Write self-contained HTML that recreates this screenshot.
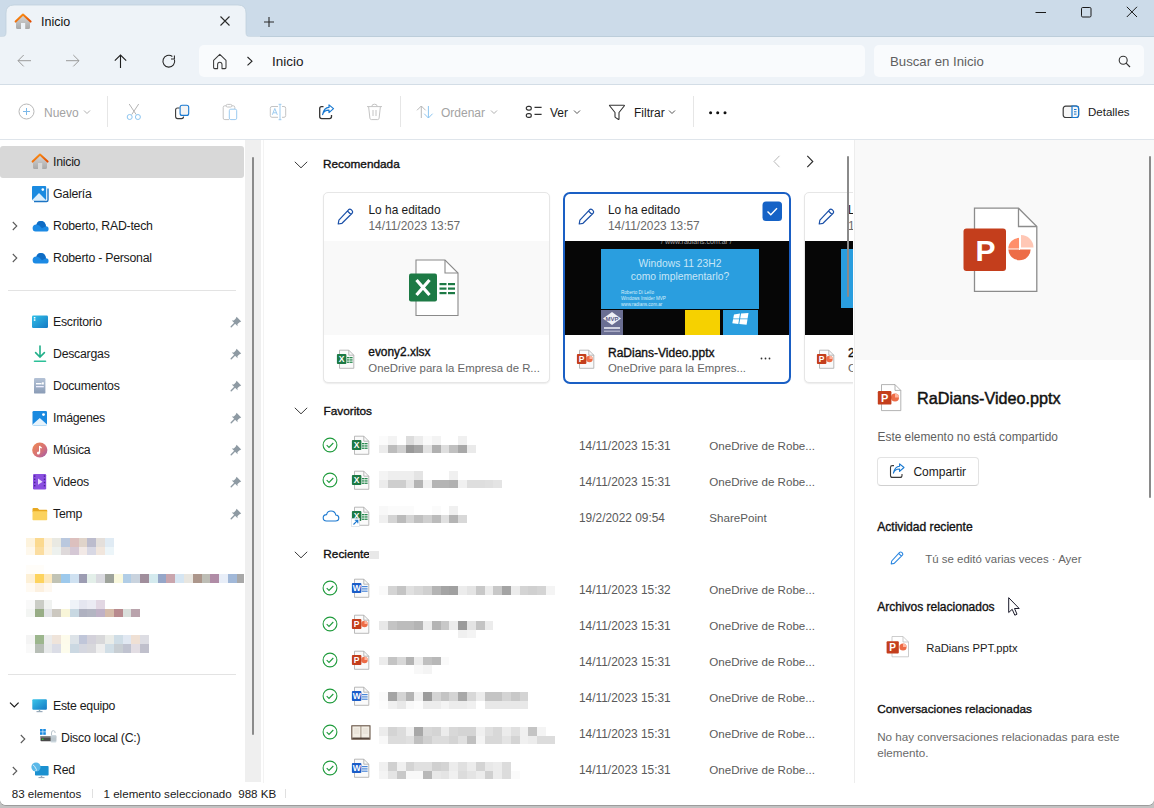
<!DOCTYPE html>
<html><head><meta charset="utf-8">
<style>
*{margin:0;padding:0;box-sizing:border-box}
html,body{width:1154px;height:808px;overflow:hidden;background:#c2c2c2}
body{font-family:"Liberation Sans",sans-serif;font-size:12px;color:#1a1a1a;position:relative}
.a{position:absolute;white-space:nowrap;line-height:1}
svg.a{overflow:visible}
.t12{font-size:12px}
#win{position:absolute;left:0;top:0;width:1154px;height:805px;background:#fff;border-radius:0 0 6px 6px;overflow:hidden;box-shadow:0 1px 0 #9c9c9c}
#title{position:absolute;left:0;top:0;width:1154px;height:37px;background:#ccdbe9}
#tab{position:absolute;left:6px;top:5px;width:241px;height:32px;background:#eef3f8;border-radius:8px 8px 0 0}
#addr{position:absolute;left:0;top:37px;width:1154px;height:48px;background:#eef3f8;border-bottom:1px solid #d3dde6}
#abox{position:absolute;left:199px;top:45px;width:666px;height:32px;background:#f9fbfd;border-radius:5px}
#sbox{position:absolute;left:874px;top:45px;width:270px;height:32px;background:#f9fbfd;border-radius:5px}
#cmd{position:absolute;left:0;top:85px;width:1154px;height:55px;background:#fff;border-bottom:1px solid #dfe5eb}
#nav{position:absolute;left:0;top:140px;width:261px;height:643px;background:#fff}
#content{position:absolute;left:261px;top:140px;width:594px;height:643px;background:#fff;overflow:hidden}
#details{position:absolute;left:855px;top:140px;width:299px;height:643px;background:#fff;border-left:1px solid #ececec}
#status{position:absolute;left:0;top:783px;width:1154px;height:22px;background:#fff}
</style></head><body>
<div id="win">
<div id="title"></div><div class="a" style="left:0;top:36px;width:1154px;height:1px;background:#bccdda"></div>
<svg class="a" style="left:0;top:0" width="260" height="38" viewBox="0 0 260 38"><path d="M1.5 37 Q6 37 6 32.5 V13 Q6 5 14 5 H238 Q246 5 246 13 V32.5 Q246 37 250.5 37" fill="#eef3f8" stroke="#bfcfdc" stroke-width="0.8"/><rect x="0" y="36.6" width="260" height="1.4" fill="#eef3f8"/></svg>
<svg class="a" style="left:14px;top:13px" width="18" height="17" viewBox="0 0 18 17">
 <defs><linearGradient id="hg" x1="0" y1="0" x2="0" y2="1"><stop offset="0" stop-color="#d4d4d4"/><stop offset="1" stop-color="#a8a8a8"/></linearGradient>
 <linearGradient id="rg" x1="0" y1="0" x2="1" y2="1"><stop offset="0" stop-color="#ff9a1a"/><stop offset="1" stop-color="#e04a00"/></linearGradient></defs>
 <path d="M2 9 L9 2.5 L16 9 V14.5 Q16 16 14.5 16 H11.2 V10 H7 V16 H3.5 Q2 16 2 14.5 Z" fill="url(#hg)"/>
 <path d="M1.6 8.6 L9 1.6 L16.6 8.6" fill="none" stroke="url(#rg)" stroke-width="2" stroke-linecap="round" stroke-linejoin="round"/>
</svg>
<div class="a" style="left:41px;top:16.3px;font-size:12.5px;color:#111">Inicio</div>
<svg class="a" style="left:219px;top:15px" width="12" height="12" viewBox="0 0 12 12"><path d="M1.5 1.5 L10.5 10.5 M10.5 1.5 L1.5 10.5" stroke="#2a2a2a" stroke-width="1.1"/></svg>
<svg class="a" style="left:263px;top:16px" width="12" height="12" viewBox="0 0 12 12"><path d="M6 1 V11 M1 6 H11" stroke="#2a2a2a" stroke-width="1.1"/></svg>
<svg class="a" style="left:1034px;top:6px" width="14" height="14" viewBox="0 0 14 14"><path d="M1.5 6.5 H12" stroke="#1a1a1a" stroke-width="1"/></svg>
<svg class="a" style="left:1080px;top:6px" width="12" height="12" viewBox="0 0 12 12"><rect x="1.5" y="1.5" width="9.5" height="9.5" rx="1.2" fill="none" stroke="#1a1a1a" stroke-width="1"/></svg>
<svg class="a" style="left:1126px;top:6px" width="12" height="12" viewBox="0 0 12 12"><path d="M0.8 0.8 L11 11 M11 0.8 L0.8 11" stroke="#1a1a1a" stroke-width="1"/></svg>
<div id="addr"></div>
<svg class="a" style="left:16px;top:53px" width="16" height="16" viewBox="0 0 16 16"><path d="M15 7.7 H2 M7.7 2 L2 7.7 L7.7 13.4" fill="none" stroke="#9a9a9a" stroke-width="1"/></svg>
<svg class="a" style="left:65px;top:53px" width="16" height="16" viewBox="0 0 16 16"><path d="M1 7.7 H14 M8.3 2 L14 7.7 L8.3 13.4" fill="none" stroke="#9a9a9a" stroke-width="1"/></svg>
<svg class="a" style="left:113px;top:53px" width="16" height="16" viewBox="0 0 16 16"><path d="M7.5 15 V2 M1.8 7.7 L7.5 2 L13.2 7.7" fill="none" stroke="#1e1e1e" stroke-width="1.1"/></svg>
<svg class="a" style="left:161px;top:53px" width="16" height="16" viewBox="0 0 16 16"><path d="M11.35 3.49 A5.9 5.9 0 1 0 13.5 6.6" fill="none" stroke="#262626" stroke-width="1.05"/><path d="M10 5.9 H13.4 V2.5" fill="none" stroke="#262626" stroke-width="1.05"/></svg>
<div id="abox"></div>
<svg class="a" style="left:211px;top:53px" width="18" height="18" viewBox="0 0 18 18"><path d="M2.6 7.4 L8.8 1.4 L15 7.4 V14.6 Q15 15.6 14 15.6 H11 V11.6 Q11 9.2 8.8 9.2 Q6.6 9.2 6.6 11.6 V15.6 H3.6 Q2.6 15.6 2.6 14.6 Z" fill="none" stroke="#3a3a3a" stroke-width="1.05" stroke-linejoin="round"/></svg>
<svg class="a" style="left:245px;top:56px" width="10" height="11" viewBox="0 0 10 11"><path d="M2.5 1 L7 5.2 L2.5 9.4" fill="none" stroke="#222" stroke-width="1.1"/></svg>
<div class="a" style="left:272px;top:54.5px;font-size:13.5px;color:#1a1a1a">Inicio</div>
<div id="sbox"></div>
<div class="a" style="left:890px;top:54.5px;font-size:13.2px;color:#5f5f5f">Buscar en Inicio</div>
<svg class="a" style="left:1118px;top:55px" width="13" height="13" viewBox="0 0 13 13"><circle cx="5.2" cy="5.2" r="4" fill="none" stroke="#333" stroke-width="1.1"/><path d="M8.1 8.1 L12 12" stroke="#333" stroke-width="1.2"/></svg>
<div id="cmd"></div>
<svg class="a" style="left:18px;top:103px" width="17" height="17" viewBox="0 0 17 17"><circle cx="8.5" cy="8.5" r="7.5" fill="none" stroke="#b8b8b8" stroke-width="1"/><path d="M8.5 5 V12 M5 8.5 H12" stroke="#7cb8e8" stroke-width="1"/></svg>
<div class="a t12" style="left:44px;top:106.5px;color:#a3a3a3">Nuevo</div>
<svg class="a" style="left:83px;top:109px" width="8" height="6" viewBox="0 0 8 6"><path d="M1 1.5 L4 4.5 L7 1.5" fill="none" stroke="#b0b0b0" stroke-width="1"/></svg>
<div class="a" style="left:107px;top:96px;width:1px;height:31px;background:#e6e6e6"></div>
<svg class="a" style="left:125px;top:103px" width="16" height="18" viewBox="0 0 16 18"><path d="M4.2 1 L11.2 11.6 M13.7 1 L6.7 11.6" stroke="#b4b4b4" stroke-width="1"/><circle cx="4.7" cy="14" r="2.5" fill="#fff" stroke="#8cc5f0" stroke-width="1"/><circle cx="12.9" cy="14" r="2.5" fill="#fff" stroke="#8cc5f0" stroke-width="1"/></svg>
<svg class="a" style="left:174px;top:104px" width="17" height="17" viewBox="0 0 17 17"><path d="M5.6 4 H3.6 Q1.6 4 1.6 6 V12.6 Q1.6 14.6 3.6 14.6 H7.6 Q9.6 14.6 9.6 12.6" fill="none" stroke="#3a3a3a" stroke-width="1.1"/><rect x="6.1" y="1.2" width="8.6" height="10.2" rx="2" fill="#f4f4f4" stroke="#1878d0" stroke-width="1.1"/></svg>
<svg class="a" style="left:222px;top:103px" width="17" height="18" viewBox="0 0 17 18"><path d="M4.2 2.8 H2.8 Q1.2 2.8 1.2 4.4 V15 Q1.2 16.6 2.8 16.6 H7" fill="none" stroke="#c4c4c4" stroke-width="1"/><path d="M9.8 2.8 H11.2 Q12.8 2.8 12.8 4.4 V6" fill="none" stroke="#c4c4c4" stroke-width="1"/><rect x="4.2" y="1.4" width="5.6" height="2.6" rx="1.2" fill="none" stroke="#c4c4c4" stroke-width="1"/><rect x="7.3" y="6.2" width="7.4" height="10.4" rx="1.5" fill="none" stroke="#9ccbf0" stroke-width="1"/></svg>
<svg class="a" style="left:269px;top:103px" width="18" height="18" viewBox="0 0 18 18"><path d="M9 3.5 H3 Q1.3 3.5 1.3 5.3 V12.5 Q1.3 14.3 3 14.3 H9 M13 3.5 H15 Q16.7 3.5 16.7 5.3 V12.5 Q16.7 14.3 15 14.3 H13" fill="none" stroke="#c4c4c4" stroke-width="1"/><path d="M3.3 11.8 L5.8 5.5 L8.3 11.8 M4.2 9.8 H7.4" fill="none" stroke="#9ccbf0" stroke-width="1"/><path d="M11 1.3 V16.7 M9.6 1.3 H12.4 M9.6 16.7 H12.4" fill="none" stroke="#9ccbf0" stroke-width="1"/></svg>
<svg class="a" style="left:318px;top:104px" width="17" height="17" viewBox="0 0 17 17"><path d="M5.5 2.6 H3.5 Q1.7 2.6 1.7 4.6 V12.6 Q1.7 14.6 3.7 14.6 H11.5 Q13.5 14.6 13.5 12.6 V11" fill="none" stroke="#333" stroke-width="1.3"/><path d="M4.6 10.6 Q5.8 6.2 11 6.2 V8.6 L15.5 4.6 L11 0.9 V3.4 Q6 3.6 4.6 10.6 Z" fill="none" stroke="#1878d0" stroke-width="1.2" stroke-linejoin="round"/></svg>
<svg class="a" style="left:366px;top:103px" width="17" height="18" viewBox="0 0 17 18"><path d="M1 3.6 H16 M5.8 3.4 Q5.8 1.2 8.5 1.2 Q11.2 1.2 11.2 3.4 M2.6 3.6 L3.9 15.2 Q4.1 16.6 5.5 16.6 H11.5 Q12.9 16.6 13.1 15.2 L14.4 3.6 M7 7 V13 M10 7 V13" fill="none" stroke="#c4c4c4" stroke-width="1"/></svg>
<div class="a" style="left:400px;top:96px;width:1px;height:31px;background:#e6e6e6"></div>
<svg class="a" style="left:416px;top:105px" width="18" height="14" viewBox="0 0 18 14"><path d="M5.3 13 V1 M1 5.3 L5.3 1 L9.6 5.3" fill="none" stroke="#b8b8b8" stroke-width="1"/><path d="M12.4 1 V13 M8.2 8.7 L12.4 13 L16.6 8.7" fill="none" stroke="#8cc5f0" stroke-width="1"/></svg>
<div class="a t12" style="left:441px;top:106.5px;color:#a3a3a3">Ordenar</div>
<svg class="a" style="left:490px;top:109px" width="8" height="6" viewBox="0 0 8 6"><path d="M1 1.5 L4 4.5 L7 1.5" fill="none" stroke="#b0b0b0" stroke-width="1"/></svg>
<svg class="a" style="left:525px;top:105px" width="18" height="14" viewBox="0 0 18 14"><rect x="1.3" y="1.3" width="5" height="3.8" rx="1.9" fill="none" stroke="#333" stroke-width="1.2"/><rect x="1.3" y="8.6" width="5" height="3.8" rx="1.9" fill="none" stroke="#333" stroke-width="1.2"/><path d="M9.5 2.4 H16.6 M9.5 9.4 H16.6" stroke="#333" stroke-width="1.2"/></svg>
<div class="a t12" style="left:550px;top:106.5px;color:#1a1a1a">Ver</div>
<svg class="a" style="left:573px;top:109px" width="8" height="6" viewBox="0 0 8 6"><path d="M1 1.5 L4 4.5 L7 1.5" fill="none" stroke="#555" stroke-width="1"/></svg>
<svg class="a" style="left:608px;top:104px" width="18" height="17" viewBox="0 0 18 17"><path d="M1.6 1.2 H16 Q16.8 1.2 16.2 2 L11 8.5 V14.8 Q11 15.8 10.2 15.3 L7.6 13.6 Q7 13.2 7 12.4 V8.5 L1.8 2 Q1.2 1.2 1.6 1.2 Z" fill="none" stroke="#333" stroke-width="1.1" stroke-linejoin="round"/></svg>
<div class="a t12" style="left:634px;top:106.5px;color:#1a1a1a">Filtrar</div>
<svg class="a" style="left:668px;top:109px" width="8" height="6" viewBox="0 0 8 6"><path d="M1 1.5 L4 4.5 L7 1.5" fill="none" stroke="#555" stroke-width="1"/></svg>
<div class="a" style="left:693px;top:96px;width:1px;height:31px;background:#e6e6e6"></div>
<svg class="a" style="left:708px;top:110px" width="20" height="6" viewBox="0 0 20 6"><circle cx="2.6" cy="2.7" r="1.5" fill="#111"/><circle cx="9.7" cy="2.7" r="1.5" fill="#111"/><circle cx="17" cy="2.7" r="1.5" fill="#111"/></svg>
<svg class="a" style="left:1062px;top:105px" width="18" height="14" viewBox="0 0 18 14"><rect x="1.2" y="1.2" width="15.4" height="11.3" rx="2.5" fill="#f7f7f7" stroke="#3a3a3a" stroke-width="1.2"/><path d="M10 1.2 H14 Q16.6 1.2 16.6 3.7 V10 Q16.6 12.5 14 12.5 H10 Z" fill="#f7f7f7" stroke="#1878d0" stroke-width="1.2"/><path d="M12 4.5 H14.5 M12 6.8 H14.5 M12 9.1 H14.5" stroke="#1878d0" stroke-width="1"/></svg>
<div class="a t12" style="left:1088px;top:106.5px;color:#1a1a1a;font-size:11.5px">Detalles</div>
<div id="nav"></div>
<div class="a" style="left:0;top:146px;width:244px;height:32px;background:#d8d8d8;border-radius:3px"></div>
<div class="a" style="left:245px;top:140px;width:16px;height:642px;background:#efefef"></div>
<div class="a" style="left:251.5px;top:157px;width:2.5px;height:578px;background:#8a8a8a;border-radius:1px"></div>
<div class="a" style="left:53px;top:156.29px;font-size:12.3px;letter-spacing:-0.25px;color:#1a1a1a;">Inicio</div>
<div class="a" style="left:53px;top:188.29px;font-size:12.3px;letter-spacing:-0.25px;color:#1a1a1a;">Galería</div>
<div class="a" style="left:53px;top:220.29px;font-size:12.3px;letter-spacing:-0.25px;color:#1a1a1a;">Roberto, RAD-tech</div>
<div class="a" style="left:53px;top:252.29px;font-size:12.3px;letter-spacing:-0.25px;color:#1a1a1a;">Roberto - Personal</div>
<div class="a" style="left:53px;top:316.29px;font-size:12.3px;letter-spacing:-0.25px;color:#1a1a1a;">Escritorio</div>
<div class="a" style="left:53px;top:348.29px;font-size:12.3px;letter-spacing:-0.25px;color:#1a1a1a;">Descargas</div>
<div class="a" style="left:53px;top:380.29px;font-size:12.3px;letter-spacing:-0.25px;color:#1a1a1a;">Documentos</div>
<div class="a" style="left:53px;top:412.29px;font-size:12.3px;letter-spacing:-0.25px;color:#1a1a1a;">Imágenes</div>
<div class="a" style="left:53px;top:444.29px;font-size:12.3px;letter-spacing:-0.25px;color:#1a1a1a;">Música</div>
<div class="a" style="left:53px;top:476.29px;font-size:12.3px;letter-spacing:-0.25px;color:#1a1a1a;">Videos</div>
<div class="a" style="left:53px;top:508.29px;font-size:12.3px;letter-spacing:-0.25px;color:#1a1a1a;">Temp</div>
<div class="a" style="left:53px;top:700.29px;font-size:12.3px;letter-spacing:-0.25px;color:#1a1a1a;">Este equipo</div>
<div class="a" style="left:53px;top:764.29px;font-size:12.3px;letter-spacing:-0.25px;color:#1a1a1a;">Red</div>
<div class="a" style="left:61px;top:732.29px;font-size:12.3px;letter-spacing:-0.25px;color:#1a1a1a;">Disco local (C:)</div>
<svg class="a" style="left:11px;top:221px" width="8" height="10" viewBox="0 0 8 10"><path d="M1.8 1 L5.8 5 L1.8 9" fill="none" stroke="#5a5a5a" stroke-width="1.1"/></svg>
<svg class="a" style="left:11px;top:253px" width="8" height="10" viewBox="0 0 8 10"><path d="M1.8 1 L5.8 5 L1.8 9" fill="none" stroke="#5a5a5a" stroke-width="1.1"/></svg>
<svg class="a" style="left:19px;top:734px" width="8" height="10" viewBox="0 0 8 10"><path d="M1.8 1 L5.8 5 L1.8 9" fill="none" stroke="#5a5a5a" stroke-width="1.1"/></svg>
<svg class="a" style="left:11px;top:766px" width="8" height="10" viewBox="0 0 8 10"><path d="M1.8 1 L5.8 5 L1.8 9" fill="none" stroke="#5a5a5a" stroke-width="1.1"/></svg>
<svg class="a" style="left:9px;top:701px" width="11" height="8" viewBox="0 0 11 8"><path d="M1 1.6 L5.3 5.9 L9.6 1.6" fill="none" stroke="#1a1a1a" stroke-width="1.2"/></svg>
<div class="a" style="left:8px;top:290px;width:228px;height:1px;background:#e3e3e3"></div>
<div class="a" style="left:8px;top:674px;width:228px;height:1px;background:#e3e3e3"></div>
<svg class="a" style="left:31px;top:153px" width="18" height="17" viewBox="0 0 18 17"><path d="M2 9 L9 2.5 L16 9 V14.5 Q16 16 14.5 16 H11.2 V10 H7 V16 H3.5 Q2 16 2 14.5 Z" fill="url(#hg)"/><path d="M1.6 8.6 L9 1.6 L16.6 8.6" fill="none" stroke="url(#rg)" stroke-width="2" stroke-linecap="round" stroke-linejoin="round"/></svg>
<svg class="a" style="left:31px;top:185px" width="18" height="18" viewBox="0 0 18 18"><path d="M3 16.5 H15.5 Q17 16.5 17 15 V3.5" fill="none" stroke="#1c74c4" stroke-width="1.4"/><rect x="1" y="1" width="14.2" height="14.2" rx="1" fill="#1a8ae0"/><path d="M1 15.2 L8 8 L15.2 15.2 Z" fill="#dbeefc"/><circle cx="11.8" cy="4.6" r="1.3" fill="#fff"/></svg>
<svg class="a" style="left:31.5px;top:219.5px" width="17" height="12" viewBox="0 0 17 12"><path d="M3.6 11.5 H14 Q16.6 11.5 16.6 8.9 Q16.6 6.4 14 6.3 Q13.2 1 8.8 1 Q5.6 1 4.4 4.4 Q0.6 4.8 0.6 8 Q0.6 11.5 3.6 11.5 Z" fill="#1c8ae4"/><path d="M4.4 4.4 Q5.6 1 8.8 1 Q13.2 1 14 6.3 L10 8.2 Q7.5 4.6 4.4 4.4 Z" fill="#0f6cc4"/></svg>
<svg class="a" style="left:31.5px;top:251.5px" width="17" height="12" viewBox="0 0 17 12"><path d="M3.6 11.5 H14 Q16.6 11.5 16.6 8.9 Q16.6 6.4 14 6.3 Q13.2 1 8.8 1 Q5.6 1 4.4 4.4 Q0.6 4.8 0.6 8 Q0.6 11.5 3.6 11.5 Z" fill="#1c8ae4"/><path d="M4.4 4.4 Q5.6 1 8.8 1 Q13.2 1 14 6.3 L10 8.2 Q7.5 4.6 4.4 4.4 Z" fill="#0f6cc4"/></svg>
<svg class="a" style="left:32px;top:315px" width="16" height="14" viewBox="0 0 16 14"><defs><linearGradient id="dg" x1="0" y1="0" x2="1" y2="1"><stop offset="0" stop-color="#30c0e8"/><stop offset="1" stop-color="#1478c4"/></linearGradient></defs><rect x="0" y="0.5" width="16" height="12.5" rx="1.2" fill="url(#dg)"/><rect x="1.8" y="2" width="1.6" height="1.5" fill="#fff"/><rect x="1.8" y="4.3" width="1.6" height="1.5" fill="#fff"/></svg>
<svg class="a" style="left:33px;top:345px" width="14" height="18" viewBox="0 0 14 18"><path d="M7 1 V12 M2.6 7.6 L7 12 L11.4 7.6" fill="none" stroke="#22b08a" stroke-width="1.6" stroke-linecap="round"/><path d="M1.5 16.3 H12.5" stroke="#2cc098" stroke-width="1.6" stroke-linecap="round"/></svg>
<svg class="a" style="left:34px;top:378px" width="12" height="16" viewBox="0 0 12 16"><defs><linearGradient id="docg" x1="0" y1="0" x2="0" y2="1"><stop offset="0" stop-color="#b4c2d6"/><stop offset="1" stop-color="#8a9cb6"/></linearGradient></defs><rect x="0" y="0" width="11.4" height="15.6" rx="1.2" fill="url(#docg)"/><rect x="2" y="5" width="5.5" height="1.4" fill="#fff"/><rect x="7.8" y="4.3" width="2" height="2.2" fill="#fff"/><rect x="2" y="8" width="7.8" height="1.3" fill="#eef"/></svg>
<svg class="a" style="left:32px;top:410px" width="16" height="16" viewBox="0 0 16 16"><rect x="0.5" y="1" width="14.5" height="14.5" rx="1.3" fill="#1a8ae0"/><path d="M0.5 14.5 L7.8 8 L15 14.5 V15.5 H0.5 Z" fill="#e6f3fc"/><circle cx="11.5" cy="4.6" r="1.4" fill="#fff"/></svg>
<svg class="a" style="left:32px;top:442px" width="16" height="16" viewBox="0 0 16 16"><defs><linearGradient id="mg" x1="0" y1="0" x2="1" y2="1"><stop offset="0" stop-color="#f08a50"/><stop offset="0.6" stop-color="#d4707a"/><stop offset="1" stop-color="#9a5ab0"/></linearGradient></defs><circle cx="7.8" cy="8" r="7.6" fill="url(#mg)"/><path d="M7.6 11 V4 Q8 5.6 9.8 5.8" fill="none" stroke="#fff" stroke-width="1.2"/><circle cx="6.4" cy="11" r="1.5" fill="#fff"/></svg>
<svg class="a" style="left:33px;top:474px" width="14" height="16" viewBox="0 0 14 16"><rect x="0" y="0" width="13.2" height="15.4" rx="1.2" fill="#8a4fe0"/><path d="M5 4.6 L9.6 7.7 L5 10.8 Z" fill="#e9dcff"/><g fill="#4a2296"><rect x="1" y="1.4" width="1.4" height="1.4"/><rect x="1" y="4.6" width="1.4" height="1.4"/><rect x="1" y="7.8" width="1.4" height="1.4"/><rect x="1" y="11" width="1.4" height="1.4"/><rect x="10.8" y="1.4" width="1.4" height="1.4"/><rect x="10.8" y="4.6" width="1.4" height="1.4"/><rect x="10.8" y="7.8" width="1.4" height="1.4"/><rect x="10.8" y="11" width="1.4" height="1.4"/></g></svg>
<svg class="a" style="left:32px;top:507px" width="16" height="14" viewBox="0 0 16 14"><path d="M0.5 2 Q0.5 1 1.5 1 H5.5 L7.3 2.8 H14.5 Q15.2 2.8 15.2 3.6 V5 H0.5 Z" fill="#e8a820"/><rect x="0.5" y="4.2" width="14.7" height="9" rx="0.8" fill="#fbd25e"/></svg>
<svg class="a" style="left:230px;top:316px" width="12" height="12" viewBox="0 0 12 12"><path d="M6.6 0.8 L11.2 5.4 L9.2 6.4 L7.4 8.2 L7.6 10.2 L1.8 4.4 L3.8 4.6 L5.6 2.8 Z" fill="#8e9aa3"/><path d="M4.4 7.6 L1.2 10.8" stroke="#8e9aa3" stroke-width="1.4" stroke-linecap="round"/></svg>
<svg class="a" style="left:230px;top:348px" width="12" height="12" viewBox="0 0 12 12"><path d="M6.6 0.8 L11.2 5.4 L9.2 6.4 L7.4 8.2 L7.6 10.2 L1.8 4.4 L3.8 4.6 L5.6 2.8 Z" fill="#8e9aa3"/><path d="M4.4 7.6 L1.2 10.8" stroke="#8e9aa3" stroke-width="1.4" stroke-linecap="round"/></svg>
<svg class="a" style="left:230px;top:380px" width="12" height="12" viewBox="0 0 12 12"><path d="M6.6 0.8 L11.2 5.4 L9.2 6.4 L7.4 8.2 L7.6 10.2 L1.8 4.4 L3.8 4.6 L5.6 2.8 Z" fill="#8e9aa3"/><path d="M4.4 7.6 L1.2 10.8" stroke="#8e9aa3" stroke-width="1.4" stroke-linecap="round"/></svg>
<svg class="a" style="left:230px;top:412px" width="12" height="12" viewBox="0 0 12 12"><path d="M6.6 0.8 L11.2 5.4 L9.2 6.4 L7.4 8.2 L7.6 10.2 L1.8 4.4 L3.8 4.6 L5.6 2.8 Z" fill="#8e9aa3"/><path d="M4.4 7.6 L1.2 10.8" stroke="#8e9aa3" stroke-width="1.4" stroke-linecap="round"/></svg>
<svg class="a" style="left:230px;top:444px" width="12" height="12" viewBox="0 0 12 12"><path d="M6.6 0.8 L11.2 5.4 L9.2 6.4 L7.4 8.2 L7.6 10.2 L1.8 4.4 L3.8 4.6 L5.6 2.8 Z" fill="#8e9aa3"/><path d="M4.4 7.6 L1.2 10.8" stroke="#8e9aa3" stroke-width="1.4" stroke-linecap="round"/></svg>
<svg class="a" style="left:230px;top:476px" width="12" height="12" viewBox="0 0 12 12"><path d="M6.6 0.8 L11.2 5.4 L9.2 6.4 L7.4 8.2 L7.6 10.2 L1.8 4.4 L3.8 4.6 L5.6 2.8 Z" fill="#8e9aa3"/><path d="M4.4 7.6 L1.2 10.8" stroke="#8e9aa3" stroke-width="1.4" stroke-linecap="round"/></svg>
<svg class="a" style="left:230px;top:508px" width="12" height="12" viewBox="0 0 12 12"><path d="M6.6 0.8 L11.2 5.4 L9.2 6.4 L7.4 8.2 L7.6 10.2 L1.8 4.4 L3.8 4.6 L5.6 2.8 Z" fill="#8e9aa3"/><path d="M4.4 7.6 L1.2 10.8" stroke="#8e9aa3" stroke-width="1.4" stroke-linecap="round"/></svg>
<svg class="a" style="left:32px;top:699px" width="16" height="14" viewBox="0 0 16 14"><defs><linearGradient id="pcg" x1="0" y1="0" x2="1" y2="1"><stop offset="0" stop-color="#3ac6ea"/><stop offset="1" stop-color="#1478c4"/></linearGradient></defs><rect x="0.3" y="0.2" width="14.6" height="10.6" rx="1" fill="url(#pcg)"/><rect x="6.8" y="10.8" width="1.4" height="1.6" fill="#8aa"/><rect x="4.5" y="12" width="6" height="1.2" fill="#9ab"/></svg>
<svg class="a" style="left:40px;top:729px" width="17" height="15" viewBox="0 0 17 15"><g fill="#1a8ae0"><rect x="0" y="0" width="2.6" height="2.6"/><rect x="3.2" y="0" width="2.6" height="2.6"/><rect x="0" y="3.2" width="2.6" height="2.6"/><rect x="3.2" y="3.2" width="2.6" height="2.6"/></g><path d="M11.5 6 V4 Q11.5 1.6 13.3 1.6 Q15.2 1.6 15.2 4" fill="none" stroke="#b8c4cc" stroke-width="1"/><rect x="0.5" y="7" width="15.6" height="5.2" rx="0.8" fill="#4a4a4a"/><rect x="0.5" y="7" width="15.6" height="1.6" fill="#8a8a8a"/><rect x="2" y="9.6" width="1.4" height="1.4" fill="#3c3"/><rect x="10.6" y="6" width="5.8" height="7.5" rx="1" fill="#c8d4dc" opacity="0.9"/></svg>
<svg class="a" style="left:31px;top:762px" width="18" height="17" viewBox="0 0 18 17"><rect x="4" y="4" width="13.6" height="9.6" rx="0.8" fill="#1a90d0"/><rect x="9.8" y="13.6" width="1.4" height="1.8" fill="#9ab"/><rect x="7.5" y="15" width="6" height="1.1" fill="#9ab"/><circle cx="5" cy="5" r="4.6" fill="#5ab8e8"/><path d="M2 3 Q4 4 4.5 6 Q6 7 5 9" fill="none" stroke="#d4eefa" stroke-width="1"/></svg>
<div class="a" style="left:0;top:0;width:244px;height:800px;overflow:hidden"><div class="a" style="left:26.00px;top:538.0px;width:8.78px;height:8.5px;background:#fdf3dd"></div><div class="a" style="left:34.78px;top:538.0px;width:8.78px;height:8.5px;background:#fbd98f"></div><div class="a" style="left:43.56px;top:538.0px;width:8.78px;height:8.5px;background:#fcf1dc"></div><div class="a" style="left:52.34px;top:538.0px;width:8.78px;height:8.5px;background:#e9e9e2"></div><div class="a" style="left:61.12px;top:538.0px;width:8.78px;height:8.5px;background:#bac8de"></div><div class="a" style="left:69.90px;top:538.0px;width:8.78px;height:8.5px;background:#dcc0be"></div><div class="a" style="left:78.68px;top:538.0px;width:8.78px;height:8.5px;background:#e0d4ca"></div><div class="a" style="left:87.46px;top:538.0px;width:8.78px;height:8.5px;background:#bcbccd"></div><div class="a" style="left:96.24px;top:538.0px;width:8.78px;height:8.5px;background:#e4dfdb"></div><div class="a" style="left:105.02px;top:538.0px;width:8.78px;height:8.5px;background:#e0ebf4"></div><div class="a" style="left:26.00px;top:546.5px;width:8.78px;height:8.5px;background:#fef8ec"></div><div class="a" style="left:34.78px;top:546.5px;width:8.78px;height:8.5px;background:#fbdda0"></div><div class="a" style="left:43.56px;top:546.5px;width:8.78px;height:8.5px;background:#fcf3e0"></div><div class="a" style="left:52.34px;top:546.5px;width:8.78px;height:8.5px;background:#edf1ee"></div><div class="a" style="left:61.12px;top:546.5px;width:8.78px;height:8.5px;background:#ded9da"></div><div class="a" style="left:69.90px;top:546.5px;width:8.78px;height:8.5px;background:#d5c8d5"></div><div class="a" style="left:78.68px;top:546.5px;width:8.78px;height:8.5px;background:#f2e9e6"></div><div class="a" style="left:87.46px;top:546.5px;width:8.78px;height:8.5px;background:#d8d8e4"></div><div class="a" style="left:96.24px;top:546.5px;width:8.78px;height:8.5px;background:#f1e6dd"></div><div class="a" style="left:105.02px;top:546.5px;width:8.78px;height:8.5px;background:#ecf5f9"></div><div class="a" style="left:26.00px;top:564.5px;width:8.78px;height:9px;background:#fffdf9"></div><div class="a" style="left:34.78px;top:564.5px;width:8.78px;height:9px;background:#fffdf9"></div><div class="a" style="left:26.00px;top:573.5px;width:8.78px;height:9px;background:#fdf0d6"></div><div class="a" style="left:34.78px;top:573.5px;width:8.78px;height:9px;background:#fdd35e"></div><div class="a" style="left:43.56px;top:573.5px;width:8.78px;height:9px;background:#fce8bc"></div><div class="a" style="left:52.34px;top:573.5px;width:8.78px;height:9px;background:#c1c3b5"></div><div class="a" style="left:61.12px;top:573.5px;width:8.78px;height:9px;background:#9dc9ec"></div><div class="a" style="left:69.90px;top:573.5px;width:8.78px;height:9px;background:#cfe1f1"></div><div class="a" style="left:78.68px;top:573.5px;width:8.78px;height:9px;background:#9c9cb2"></div><div class="a" style="left:87.46px;top:573.5px;width:8.78px;height:9px;background:#e3efe9"></div><div class="a" style="left:96.24px;top:573.5px;width:8.78px;height:9px;background:#dadae0"></div><div class="a" style="left:105.02px;top:573.5px;width:8.78px;height:9px;background:#9ea39b"></div><div class="a" style="left:113.80px;top:573.5px;width:8.78px;height:9px;background:#f9f8dd"></div><div class="a" style="left:122.58px;top:573.5px;width:8.78px;height:9px;background:#b1cde6"></div><div class="a" style="left:131.36px;top:573.5px;width:8.78px;height:9px;background:#c9d3de"></div><div class="a" style="left:140.14px;top:573.5px;width:8.78px;height:9px;background:#a08e9c"></div><div class="a" style="left:148.92px;top:573.5px;width:8.78px;height:9px;background:#d4eaee"></div><div class="a" style="left:157.70px;top:573.5px;width:8.78px;height:9px;background:#95a6c8"></div><div class="a" style="left:166.48px;top:573.5px;width:8.78px;height:9px;background:#c9a5ad"></div><div class="a" style="left:175.26px;top:573.5px;width:8.78px;height:9px;background:#d5e5f2"></div><div class="a" style="left:184.04px;top:573.5px;width:8.78px;height:9px;background:#e8e6e0"></div><div class="a" style="left:192.82px;top:573.5px;width:8.78px;height:9px;background:#ac968b"></div><div class="a" style="left:201.60px;top:573.5px;width:8.78px;height:9px;background:#bdbdb5"></div><div class="a" style="left:210.38px;top:573.5px;width:8.78px;height:9px;background:#b08ca6"></div><div class="a" style="left:219.16px;top:573.5px;width:8.78px;height:9px;background:#e8eef8"></div><div class="a" style="left:227.94px;top:573.5px;width:8.78px;height:9px;background:#a1b8d8"></div><div class="a" style="left:236.72px;top:573.5px;width:8.78px;height:9px;background:#a8a8a8"></div><div class="a" style="left:26.00px;top:582.5px;width:8.78px;height:9px;background:#fffaf2"></div><div class="a" style="left:34.78px;top:582.5px;width:8.78px;height:9px;background:#fcf0df"></div><div class="a" style="left:43.56px;top:582.5px;width:8.78px;height:9px;background:#fef8f0"></div><div class="a" style="left:26.00px;top:600.0px;width:8.78px;height:8.5px;background:#f9f9f9"></div><div class="a" style="left:34.78px;top:600.0px;width:8.78px;height:8.5px;background:#cbcdc6"></div><div class="a" style="left:43.56px;top:600.0px;width:8.78px;height:8.5px;background:#f0f2f0"></div><div class="a" style="left:69.90px;top:600.0px;width:8.78px;height:8.5px;background:#eff3f8"></div><div class="a" style="left:78.68px;top:600.0px;width:8.78px;height:8.5px;background:#e5e6f0"></div><div class="a" style="left:87.46px;top:600.0px;width:8.78px;height:8.5px;background:#ebebf3"></div><div class="a" style="left:96.24px;top:600.0px;width:8.78px;height:8.5px;background:#e2d7e3"></div><div class="a" style="left:26.00px;top:608.5px;width:8.78px;height:8.5px;background:#f3f5f3"></div><div class="a" style="left:34.78px;top:608.5px;width:8.78px;height:8.5px;background:#98ad86"></div><div class="a" style="left:43.56px;top:608.5px;width:8.78px;height:8.5px;background:#e2e3e6"></div><div class="a" style="left:52.34px;top:608.5px;width:8.78px;height:8.5px;background:#ccc8c0"></div><div class="a" style="left:61.12px;top:608.5px;width:8.78px;height:8.5px;background:#f8f5d8"></div><div class="a" style="left:69.90px;top:608.5px;width:8.78px;height:8.5px;background:#c8d8e2"></div><div class="a" style="left:78.68px;top:608.5px;width:8.78px;height:8.5px;background:#afb1c0"></div><div class="a" style="left:87.46px;top:608.5px;width:8.78px;height:8.5px;background:#b3b5c2"></div><div class="a" style="left:96.24px;top:608.5px;width:8.78px;height:8.5px;background:#bfb1c6"></div><div class="a" style="left:105.02px;top:608.5px;width:8.78px;height:8.5px;background:#d5bba9"></div><div class="a" style="left:113.80px;top:608.5px;width:8.78px;height:8.5px;background:#b88a8e"></div><div class="a" style="left:122.58px;top:608.5px;width:8.78px;height:8.5px;background:#d9dfdb"></div><div class="a" style="left:131.36px;top:608.5px;width:8.78px;height:8.5px;background:#b9a3ac"></div><div class="a" style="left:26.00px;top:634.6px;width:8.78px;height:9.2px;background:#f4f4f4"></div><div class="a" style="left:34.78px;top:634.6px;width:8.78px;height:9.2px;background:#9cb68d"></div><div class="a" style="left:43.56px;top:634.6px;width:8.78px;height:9.2px;background:#eaebeb"></div><div class="a" style="left:52.34px;top:634.6px;width:8.78px;height:9.2px;background:#efe4da"></div><div class="a" style="left:61.12px;top:634.6px;width:8.78px;height:9.2px;background:#fdfbeb"></div><div class="a" style="left:69.90px;top:634.6px;width:8.78px;height:9.2px;background:#dde3e8"></div><div class="a" style="left:78.68px;top:634.6px;width:8.78px;height:9.2px;background:#c0c6d9"></div><div class="a" style="left:87.46px;top:634.6px;width:8.78px;height:9.2px;background:#d3d1da"></div><div class="a" style="left:96.24px;top:634.6px;width:8.78px;height:9.2px;background:#d8d8da"></div><div class="a" style="left:105.02px;top:634.6px;width:8.78px;height:9.2px;background:#eaece8"></div><div class="a" style="left:113.80px;top:634.6px;width:8.78px;height:9.2px;background:#cfdde6"></div><div class="a" style="left:122.58px;top:634.6px;width:8.78px;height:9.2px;background:#e1e8f2"></div><div class="a" style="left:131.36px;top:634.6px;width:8.78px;height:9.2px;background:#efe0d4"></div><div class="a" style="left:140.14px;top:634.6px;width:8.78px;height:9.2px;background:#dddde3"></div><div class="a" style="left:26.00px;top:643.8000000000001px;width:8.78px;height:9.2px;background:#f9f9f9"></div><div class="a" style="left:34.78px;top:643.8000000000001px;width:8.78px;height:9.2px;background:#b7beb6"></div><div class="a" style="left:43.56px;top:643.8000000000001px;width:8.78px;height:9.2px;background:#e7e9ea"></div><div class="a" style="left:52.34px;top:643.8000000000001px;width:8.78px;height:9.2px;background:#dbdde6"></div><div class="a" style="left:61.12px;top:643.8000000000001px;width:8.78px;height:9.2px;background:#fdfcec"></div><div class="a" style="left:69.90px;top:643.8000000000001px;width:8.78px;height:9.2px;background:#cbd8e2"></div><div class="a" style="left:78.68px;top:643.8000000000001px;width:8.78px;height:9.2px;background:#d5d7e0"></div><div class="a" style="left:87.46px;top:643.8000000000001px;width:8.78px;height:9.2px;background:#d8d8dc"></div><div class="a" style="left:96.24px;top:643.8000000000001px;width:8.78px;height:9.2px;background:#eeeeee"></div><div class="a" style="left:105.02px;top:643.8000000000001px;width:8.78px;height:9.2px;background:#d1dee6"></div><div class="a" style="left:113.80px;top:643.8000000000001px;width:8.78px;height:9.2px;background:#c8ced3"></div><div class="a" style="left:122.58px;top:643.8000000000001px;width:8.78px;height:9.2px;background:#c0c3d0"></div><div class="a" style="left:131.36px;top:643.8000000000001px;width:8.78px;height:9.2px;background:#e2dde3"></div><div class="a" style="left:140.14px;top:643.8000000000001px;width:8.78px;height:9.2px;background:#c0c0cc"></div></div><div id="content"></div>
<div class="a" style="left:263px;top:140px;width:1px;height:643px;background:#f3f3f3"></div>
<svg class="a" style="left:294px;top:161px" width="14" height="8" viewBox="0 0 14 8"><path d="M0.8 0.8 L7 6.8 L13.2 0.8" fill="none" stroke="#3a3a3a" stroke-width="1"/></svg>
<svg class="a" style="left:294px;top:407px" width="14" height="8" viewBox="0 0 14 8"><path d="M0.8 0.8 L7 6.8 L13.2 0.8" fill="none" stroke="#3a3a3a" stroke-width="1"/></svg>
<svg class="a" style="left:294px;top:551px" width="14" height="8" viewBox="0 0 14 8"><path d="M0.8 0.8 L7 6.8 L13.2 0.8" fill="none" stroke="#3a3a3a" stroke-width="1"/></svg>
<div class="a" style="left:323px;top:159.41px;font-size:11.8px;color:#111;-webkit-text-stroke:0.35px #111">Recomendada</div>
<div class="a" style="left:323.5px;top:405.81px;font-size:11.8px;color:#111;-webkit-text-stroke:0.35px #111">Favoritos</div>
<div class="a" style="left:323.3px;top:549.41px;font-size:11.8px;color:#111;-webkit-text-stroke:0.35px #111">Reciente</div>
<div class="a" style="left:369px;top:551px;width:10px;height:8px;background:#e8e8e8"></div>
<svg class="a" style="left:773px;top:155px" width="8" height="13" viewBox="0 0 8 13"><path d="M6.5 0.8 L1 6.5 L6.5 12.2" fill="none" stroke="#b8b8b8" stroke-width="1"/></svg>
<svg class="a" style="left:806px;top:155px" width="8" height="13" viewBox="0 0 8 13"><path d="M1.3 0.8 L6.8 6.5 L1.3 12.2" fill="none" stroke="#2a2a2a" stroke-width="1.1"/></svg>
<div class="a" style="left:323px;top:192px;width:227px;height:191px;border:1px solid #e6e6e6;border-radius:5px;background:#fff;box-shadow:0 1px 1.5px rgba(0,0,0,0.08)"></div>
<div class="a" style="left:563px;top:192px;width:228px;height:192px;border:2px solid #1a5fc4;border-radius:7px;background:#fff"></div>
<div class="a" style="left:804px;top:192px;width:60px;height:191px;border:1px solid #e6e6e6;border-radius:5px;background:#fff;box-shadow:0 1px 1.5px rgba(0,0,0,0.08)"></div>
<svg class="a" style="left:337px;top:208px" width="17" height="17" viewBox="0 0 17 17"><path d="M11.5 1.8 Q12.8 0.6 14.3 1.8 L15.1 2.6 Q16.3 4 15.1 5.3 L5 15.3 L1.2 16 L1.9 12.2 Z M10.4 3 L14 6.5" fill="none" stroke="#1a50a8" stroke-width="1.2" stroke-linejoin="round"/></svg>
<div class="a" style="left:368.5px;top:204.83px;font-size:11.9px;color:#1a1a1a;">Lo ha editado</div>
<div class="a" style="left:368.5px;top:220.73px;font-size:11.9px;color:#6a6a6a;">14/11/2023 13:57</div>
<div class="a" style="left:324px;top:241px;width:225px;height:94px;background:#f9f9f9"></div>
<svg class="a" style="left:408px;top:259px" width="52" height="58" viewBox="0 0 52 58"><path d="M8 1 H37 L50 14 V56.5 H8 Z" fill="#fff" stroke="#8a8a8a" stroke-width="1.1"/><path d="M37 1 V14 H50" fill="none" stroke="#8a8a8a" stroke-width="1.1"/><rect x="1" y="14.5" width="28" height="28" rx="2" fill="#1d7a45"/><path d="M8.5 21 L15 28.5 L8.5 36 M21.5 21 L15 28.5 L21.5 36" fill="none" stroke="#fff" stroke-width="3.2"/><g fill="#1d7a45"><rect x="31.5" y="24" width="7" height="2.2"/><rect x="40" y="24" width="7" height="2.2"/><rect x="31.5" y="28.5" width="7" height="2.2"/><rect x="40" y="28.5" width="7" height="2.2"/><rect x="31.5" y="33" width="7" height="2.2"/><rect x="40" y="33" width="7" height="2.2"/></g></svg>
<svg class="a" style="left:336px;top:349px" width="19" height="21" viewBox="0 0 19 21"><path d="M3.5 1.2 H12.8 L17.8 6.2 V19.3 H3.5 Z" fill="#fafafa" stroke="#a8a8a8" stroke-width="0.8"/><path d="M12.8 1.2 V6.2 H17.8" fill="none" stroke="#a8a8a8" stroke-width="0.8"/><g fill="#2a8a50"><rect x="11" y="8" width="2.6" height="1.3"/><rect x="14" y="8" width="2.6" height="1.3"/><rect x="11" y="10.3" width="2.6" height="1.3"/><rect x="14" y="10.3" width="2.6" height="1.3"/><rect x="11" y="12.6" width="2.6" height="1.3"/><rect x="14" y="12.6" width="2.6" height="1.3"/></g><rect x="0.9" y="5" width="9.5" height="10" rx="1" fill="#1d7a45"/><text x="5.65" y="13.4" font-family="Liberation Sans" font-weight="bold" font-size="8.5" fill="#fff" text-anchor="middle">X</text></svg>
<div class="a" style="left:368.3px;top:346.5px;font-size:11.9px;-webkit-text-stroke:0.35px #111;color:#111;line-height:1">evony2.xlsx</div>
<div class="a" style="left:368.3px;top:362.95px;font-size:11.4px;color:#666;">OneDrive para la Empresa de R...</div>
<svg class="a" style="left:578px;top:208px" width="17" height="17" viewBox="0 0 17 17"><path d="M11.5 1.8 Q12.8 0.6 14.3 1.8 L15.1 2.6 Q16.3 4 15.1 5.3 L5 15.3 L1.2 16 L1.9 12.2 Z M10.4 3 L14 6.5" fill="none" stroke="#1a50a8" stroke-width="1.2" stroke-linejoin="round"/></svg>
<div class="a" style="left:608px;top:204.83px;font-size:11.9px;color:#1a1a1a;">Lo ha editado</div>
<div class="a" style="left:608px;top:220.73px;font-size:11.9px;color:#6a6a6a;">14/11/2023 13:57</div>
<svg class="a" style="left:762px;top:201px" width="21" height="21" viewBox="0 0 21 21"><rect x="0.5" y="0.5" width="19.5" height="19.5" rx="3.5" fill="#1562c6"/><path d="M5.5 10.5 L8.8 13.8 L15 7.2" fill="none" stroke="#fff" stroke-width="1.4"/></svg>
<div class="a" style="left:565px;top:241px;width:224px;height:94px;background:#060606;overflow:hidden">
<div class="a" style="left:96px;top:-3px;font-size:7px;color:#a0a0a0">/ www.radians.com.ar /</div>
<div class="a" style="left:36px;top:8px;width:158px;height:60px;background:#2a9edf"></div>
<div class="a" style="left:36px;top:15.5px;width:158px;text-align:center;font-size:10.3px;color:#c8e6f7;line-height:13.5px;white-space:normal">Windows 11 23H2<br>como implementarlo?</div>
<div class="a" style="left:56px;top:49px;font-size:4.6px;color:#d8eefa;line-height:6px">Roberto Di Lello<br>Windows Insider MVP<br>www.radians.com.ar</div>
<div class="a" style="left:36px;top:69px;width:22px;height:25px;background:#6a6e92"></div>
<svg class="a" style="left:37px;top:70px" width="20" height="24" viewBox="0 0 20 24"><path d="M10 1 L19 7.5 L10 14 L1 7.5 Z" fill="#eef0f6"/><text x="10" y="10" font-family="Liberation Sans" font-weight="bold" font-size="6" fill="#5a5e86" text-anchor="middle">MVP</text><rect x="2" y="16" width="16" height="2" fill="#d0d2e0"/><rect x="2" y="19.5" width="16" height="1.5" fill="#a8aac4"/></svg>
<div class="a" style="left:120px;top:69px;width:35px;height:25px;background:#f6d100"></div>
<div class="a" style="left:158px;top:69px;width:35px;height:25px;background:#2a9edf"></div>
<svg class="a" style="left:167px;top:72px" width="17" height="12" viewBox="0 0 17 12"><path d="M2 1.5 L8 0.6 L7.2 5.4 H1.2 Z M9 0.5 L16.5 0 L15.6 5.4 H8.2 Z M1.1 6.2 H7.1 L6.3 11 L0.3 10.2 Z M8.1 6.2 H15.5 L14.6 11.8 L7.3 11 Z" fill="#fff"/></svg>
</div>
<svg class="a" style="left:576px;top:349px" width="19" height="21" viewBox="0 0 19 21"><path d="M3.5 1.2 H12.8 L17.8 6.2 V19.3 H3.5 Z" fill="#fafafa" stroke="#a8a8a8" stroke-width="0.8"/><path d="M12.8 1.2 V6.2 H17.8" fill="none" stroke="#a8a8a8" stroke-width="0.8"/><circle cx="13.5" cy="10" r="3.2" fill="#ed6c47"/><path d="M13.5 6.8 A3.2 3.2 0 0 1 16.7 10 H13.5 Z" fill="#ffb59e"/><rect x="0.9" y="5" width="9.5" height="10" rx="1" fill="#c43e1c"/><text x="5.65" y="13.4" font-family="Liberation Sans" font-weight="bold" font-size="8.5" fill="#fff" text-anchor="middle">P</text></svg>
<div class="a" style="left:608px;top:346.5px;font-size:12px;-webkit-text-stroke:0.35px #111;color:#111;line-height:1">RaDians-Video.pptx</div>
<div class="a" style="left:608px;top:362.95px;font-size:11.4px;color:#666;">OneDrive para la Empres...</div>
<svg class="a" style="left:760px;top:357px" width="11" height="3" viewBox="0 0 11 3"><circle cx="1.5" cy="1.5" r="0.9" fill="#333"/><circle cx="5.5" cy="1.5" r="0.9" fill="#333"/><circle cx="9.5" cy="1.5" r="0.9" fill="#333"/></svg>
<svg class="a" style="left:818px;top:208px" width="17" height="17" viewBox="0 0 17 17"><path d="M11.5 1.8 Q12.8 0.6 14.3 1.8 L15.1 2.6 Q16.3 4 15.1 5.3 L5 15.3 L1.2 16 L1.9 12.2 Z M10.4 3 L14 6.5" fill="none" stroke="#1a50a8" stroke-width="1.2" stroke-linejoin="round"/></svg>
<div class="a" style="left:848px;top:204.83px;font-size:11.9px;color:#1a1a1a;">L</div>
<div class="a" style="left:848px;top:220.73px;font-size:11.9px;color:#6a6a6a;">1</div>
<div class="a" style="left:805px;top:241px;width:50px;height:94px;background:#060606"></div>
<div class="a" style="left:840.5px;top:249px;width:15px;height:59px;background:#2a9edf"></div>
<svg class="a" style="left:816px;top:349px" width="19" height="21" viewBox="0 0 19 21"><path d="M3.5 1.2 H12.8 L17.8 6.2 V19.3 H3.5 Z" fill="#fafafa" stroke="#a8a8a8" stroke-width="0.8"/><path d="M12.8 1.2 V6.2 H17.8" fill="none" stroke="#a8a8a8" stroke-width="0.8"/><circle cx="13.5" cy="10" r="3.2" fill="#ed6c47"/><path d="M13.5 6.8 A3.2 3.2 0 0 1 16.7 10 H13.5 Z" fill="#ffb59e"/><rect x="0.9" y="5" width="9.5" height="10" rx="1" fill="#c43e1c"/><text x="5.65" y="13.4" font-family="Liberation Sans" font-weight="bold" font-size="8.5" fill="#fff" text-anchor="middle">P</text></svg>
<div class="a" style="left:848px;top:346.5px;font-size:12px;-webkit-text-stroke:0.35px #111;color:#111;line-height:1">2</div>
<div class="a" style="left:848px;top:362.95px;font-size:11.4px;color:#666;">O</div>
<div class="a" style="left:847px;top:156px;width:2px;height:141px;background:#8a8a8a;border-radius:1px"></div>
<div class="a" style="left:853px;top:140px;width:2px;height:643px;background:#fff"></div>
<svg class="a" style="left:322.4px;top:436.5px" width="16" height="16" viewBox="0 0 16 16"><circle cx="8" cy="8" r="6.9" fill="none" stroke="#1f9b3c" stroke-width="1.1"/><path d="M4.7 8.2 L7 10.4 L11.3 6" fill="none" stroke="#1f9b3c" stroke-width="1.1"/></svg>
<svg class="a" style="left:351px;top:434.5px" width="19" height="21" viewBox="0 0 19 21"><path d="M3.5 1.2 H12.8 L17.8 6.2 V19.3 H3.5 Z" fill="#fafafa" stroke="#a8a8a8" stroke-width="0.8"/><path d="M12.8 1.2 V6.2 H17.8" fill="none" stroke="#a8a8a8" stroke-width="0.8"/><g fill="#2a8a50"><rect x="11" y="8" width="2.6" height="1.3"/><rect x="14" y="8" width="2.6" height="1.3"/><rect x="11" y="10.3" width="2.6" height="1.3"/><rect x="14" y="10.3" width="2.6" height="1.3"/><rect x="11" y="12.6" width="2.6" height="1.3"/><rect x="14" y="12.6" width="2.6" height="1.3"/></g><rect x="0.9" y="5" width="9.5" height="10" rx="1" fill="#1d7a45"/><text x="5.65" y="13.4" font-family="Liberation Sans" font-weight="bold" font-size="8.5" fill="#fff" text-anchor="middle">X</text></svg>
<div class="a" style="left:379.20px;top:436.00px;width:8.78px;height:8.6px;background:#fbfbfb"></div>
<div class="a" style="left:387.98px;top:436.00px;width:8.78px;height:8.6px;background:#f3f3f3"></div>
<div class="a" style="left:405.54px;top:436.00px;width:8.78px;height:8.6px;background:#dcdcdc"></div>
<div class="a" style="left:414.32px;top:436.00px;width:8.78px;height:8.6px;background:#ececec"></div>
<div class="a" style="left:423.10px;top:436.00px;width:8.78px;height:8.6px;background:#fafafa"></div>
<div class="a" style="left:431.88px;top:436.00px;width:8.78px;height:8.6px;background:#f3f3f3"></div>
<div class="a" style="left:458.22px;top:436.00px;width:8.78px;height:8.6px;background:#f0f0f0"></div>
<div class="a" style="left:379.20px;top:444.60px;width:8.78px;height:8.6px;background:#ececec"></div>
<div class="a" style="left:387.98px;top:444.60px;width:8.78px;height:8.6px;background:#bcbcbc"></div>
<div class="a" style="left:396.76px;top:444.60px;width:8.78px;height:8.6px;background:#d0d0d0"></div>
<div class="a" style="left:405.54px;top:444.60px;width:8.78px;height:8.6px;background:#999999"></div>
<div class="a" style="left:414.32px;top:444.60px;width:8.78px;height:8.6px;background:#a6a6a6"></div>
<div class="a" style="left:423.10px;top:444.60px;width:8.78px;height:8.6px;background:#e2e2e2"></div>
<div class="a" style="left:431.88px;top:444.60px;width:8.78px;height:8.6px;background:#b0b0b0"></div>
<div class="a" style="left:440.66px;top:444.60px;width:8.78px;height:8.6px;background:#dedede"></div>
<div class="a" style="left:449.44px;top:444.60px;width:8.78px;height:8.6px;background:#c0c0c0"></div>
<div class="a" style="left:458.22px;top:444.60px;width:8.78px;height:8.6px;background:#a8a8a8"></div>
<div class="a" style="left:467.00px;top:444.60px;width:8.78px;height:8.6px;background:#eaeaea"></div>
<div class="a" style="left:579px;top:441.23px;font-size:11.9px;color:#5a5a5a;">14/11/2023 15:31</div>
<div class="a" style="left:709.3px;top:439.88px;font-size:11.6px;color:#5a5a5a;">OneDrive de Robe...</div>
<svg class="a" style="left:322.4px;top:472.3px" width="16" height="16" viewBox="0 0 16 16"><circle cx="8" cy="8" r="6.9" fill="none" stroke="#1f9b3c" stroke-width="1.1"/><path d="M4.7 8.2 L7 10.4 L11.3 6" fill="none" stroke="#1f9b3c" stroke-width="1.1"/></svg>
<svg class="a" style="left:351px;top:470.3px" width="19" height="21" viewBox="0 0 19 21"><path d="M3.5 1.2 H12.8 L17.8 6.2 V19.3 H3.5 Z" fill="#fafafa" stroke="#a8a8a8" stroke-width="0.8"/><path d="M12.8 1.2 V6.2 H17.8" fill="none" stroke="#a8a8a8" stroke-width="0.8"/><g fill="#2a8a50"><rect x="11" y="8" width="2.6" height="1.3"/><rect x="14" y="8" width="2.6" height="1.3"/><rect x="11" y="10.3" width="2.6" height="1.3"/><rect x="14" y="10.3" width="2.6" height="1.3"/><rect x="11" y="12.6" width="2.6" height="1.3"/><rect x="14" y="12.6" width="2.6" height="1.3"/></g><rect x="0.9" y="5" width="9.5" height="10" rx="1" fill="#1d7a45"/><text x="5.65" y="13.4" font-family="Liberation Sans" font-weight="bold" font-size="8.5" fill="#fff" text-anchor="middle">X</text></svg>
<div class="a" style="left:379.20px;top:471.30px;width:8.78px;height:8.6px;background:#f4f4f4"></div>
<div class="a" style="left:387.98px;top:471.30px;width:8.78px;height:8.6px;background:#eeeeee"></div>
<div class="a" style="left:396.76px;top:471.30px;width:8.78px;height:8.6px;background:#eeeeee"></div>
<div class="a" style="left:405.54px;top:471.30px;width:8.78px;height:8.6px;background:#eeeeee"></div>
<div class="a" style="left:414.32px;top:471.30px;width:8.78px;height:8.6px;background:#e4e4e4"></div>
<div class="a" style="left:449.44px;top:471.30px;width:8.78px;height:8.6px;background:#f0f0f0"></div>
<div class="a" style="left:379.20px;top:479.90px;width:8.78px;height:8.6px;background:#ececec"></div>
<div class="a" style="left:387.98px;top:479.90px;width:8.78px;height:8.6px;background:#cecece"></div>
<div class="a" style="left:396.76px;top:479.90px;width:8.78px;height:8.6px;background:#cecece"></div>
<div class="a" style="left:405.54px;top:479.90px;width:8.78px;height:8.6px;background:#e6e6e6"></div>
<div class="a" style="left:414.32px;top:479.90px;width:8.78px;height:8.6px;background:#b4b4b4"></div>
<div class="a" style="left:423.10px;top:479.90px;width:8.78px;height:8.6px;background:#f0f0f0"></div>
<div class="a" style="left:431.88px;top:479.90px;width:8.78px;height:8.6px;background:#b4b4b4"></div>
<div class="a" style="left:440.66px;top:479.90px;width:8.78px;height:8.6px;background:#b4b4b4"></div>
<div class="a" style="left:449.44px;top:479.90px;width:8.78px;height:8.6px;background:#b0b0b0"></div>
<div class="a" style="left:458.22px;top:479.90px;width:8.78px;height:8.6px;background:#f0f0f0"></div>
<div class="a" style="left:467.00px;top:479.90px;width:8.78px;height:8.6px;background:#dedede"></div>
<div class="a" style="left:475.78px;top:479.90px;width:8.78px;height:8.6px;background:#dedede"></div>
<div class="a" style="left:484.56px;top:479.90px;width:8.78px;height:8.6px;background:#e0e0e0"></div>
<div class="a" style="left:493.34px;top:479.90px;width:8.78px;height:8.6px;background:#e4e4e4"></div>
<div class="a" style="left:579px;top:477.03px;font-size:11.9px;color:#5a5a5a;">14/11/2023 15:31</div>
<div class="a" style="left:709.3px;top:475.68px;font-size:11.6px;color:#5a5a5a;">OneDrive de Robe...</div>
<svg class="a" style="left:322px;top:510.1px" width="18" height="12" viewBox="0 0 18 12"><path d="M4.5 11 H13.5 Q16.8 11 16.8 8 Q16.8 5.2 13.8 5 Q13 1 9 1 Q5.3 1 4.6 4.6 Q1.2 4.8 1.2 7.8 Q1.2 11 4.5 11 Z" fill="none" stroke="#1a78d0" stroke-width="1.1"/></svg>
<svg class="a" style="left:351px;top:506.1px" width="19" height="21" viewBox="0 0 19 21"><path d="M3.5 1.2 H12.8 L17.8 6.2 V19.3 H3.5 Z" fill="#fafafa" stroke="#a8a8a8" stroke-width="0.8"/><path d="M12.8 1.2 V6.2 H17.8" fill="none" stroke="#a8a8a8" stroke-width="0.8"/><g fill="#2a8a50"><rect x="11" y="8" width="2.6" height="1.3"/><rect x="14" y="8" width="2.6" height="1.3"/><rect x="11" y="10.3" width="2.6" height="1.3"/><rect x="14" y="10.3" width="2.6" height="1.3"/><rect x="11" y="12.6" width="2.6" height="1.3"/><rect x="14" y="12.6" width="2.6" height="1.3"/></g><rect x="0.9" y="5" width="9.5" height="10" rx="1" fill="#1d7a45"/><text x="5.65" y="13.4" font-family="Liberation Sans" font-weight="bold" font-size="8.5" fill="#fff" text-anchor="middle">X</text><rect x="0.5" y="12.5" width="8" height="8" fill="#fff" stroke="#cfd8e0" stroke-width="0.6"/><path d="M2.5 18.5 L6.8 14.2 M3.8 14.2 H6.8 V17.2" fill="none" stroke="#1a78d0" stroke-width="1.1"/></svg>
<div class="a" style="left:379.20px;top:506.30px;width:8.78px;height:8.6px;background:#f8f8f8"></div>
<div class="a" style="left:387.98px;top:506.30px;width:8.78px;height:8.6px;background:#fbfbfb"></div>
<div class="a" style="left:396.76px;top:506.30px;width:8.78px;height:8.6px;background:#fbfbfb"></div>
<div class="a" style="left:405.54px;top:506.30px;width:8.78px;height:8.6px;background:#fbfbfb"></div>
<div class="a" style="left:431.88px;top:506.30px;width:8.78px;height:8.6px;background:#fbfbfb"></div>
<div class="a" style="left:449.44px;top:506.30px;width:8.78px;height:8.6px;background:#f0f0f0"></div>
<div class="a" style="left:379.20px;top:514.90px;width:8.78px;height:8.6px;background:#f0f0f0"></div>
<div class="a" style="left:387.98px;top:514.90px;width:8.78px;height:8.6px;background:#d4d4d4"></div>
<div class="a" style="left:396.76px;top:514.90px;width:8.78px;height:8.6px;background:#bbbbbb"></div>
<div class="a" style="left:405.54px;top:514.90px;width:8.78px;height:8.6px;background:#d4d4d4"></div>
<div class="a" style="left:414.32px;top:514.90px;width:8.78px;height:8.6px;background:#c0c0c0"></div>
<div class="a" style="left:423.10px;top:514.90px;width:8.78px;height:8.6px;background:#cfcfcf"></div>
<div class="a" style="left:431.88px;top:514.90px;width:8.78px;height:8.6px;background:#bbbbbb"></div>
<div class="a" style="left:440.66px;top:514.90px;width:8.78px;height:8.6px;background:#e0e0e0"></div>
<div class="a" style="left:449.44px;top:514.90px;width:8.78px;height:8.6px;background:#b4b4b4"></div>
<div class="a" style="left:458.22px;top:514.90px;width:8.78px;height:8.6px;background:#d8d8d8"></div>
<div class="a" style="left:579px;top:512.83px;font-size:11.9px;color:#5a5a5a;">19/2/2022 09:54</div>
<div class="a" style="left:709.3px;top:512.48px;font-size:11.6px;color:#5a5a5a;">SharePoint</div>
<svg class="a" style="left:322.4px;top:580.3000000000001px" width="16" height="16" viewBox="0 0 16 16"><circle cx="8" cy="8" r="6.9" fill="none" stroke="#1f9b3c" stroke-width="1.1"/><path d="M4.7 8.2 L7 10.4 L11.3 6" fill="none" stroke="#1f9b3c" stroke-width="1.1"/></svg>
<svg class="a" style="left:351px;top:578.3px" width="19" height="21" viewBox="0 0 19 21"><path d="M3.5 1.2 H12.8 L17.8 6.2 V19.3 H3.5 Z" fill="#fafafa" stroke="#a8a8a8" stroke-width="0.8"/><path d="M12.8 1.2 V6.2 H17.8" fill="none" stroke="#a8a8a8" stroke-width="0.8"/><g fill="#4a86d8"><rect x="11" y="8" width="5.6" height="1.2"/><rect x="11" y="10.3" width="5.6" height="1.2"/><rect x="11" y="12.6" width="5.6" height="1.2"/></g><rect x="0.9" y="5" width="9.5" height="10" rx="1" fill="#1a5cc8"/><text x="5.65" y="13.4" font-family="Liberation Sans" font-weight="bold" font-size="8.5" fill="#fff" text-anchor="middle">W</text></svg>
<div class="a" style="left:379.20px;top:586.10px;width:8.78px;height:8.6px;background:#fafafa"></div>
<div class="a" style="left:387.98px;top:586.10px;width:8.78px;height:8.6px;background:#d4d4d4"></div>
<div class="a" style="left:396.76px;top:586.10px;width:8.78px;height:8.6px;background:#c4c4c4"></div>
<div class="a" style="left:405.54px;top:586.10px;width:8.78px;height:8.6px;background:#e0e0e0"></div>
<div class="a" style="left:414.32px;top:586.10px;width:8.78px;height:8.6px;background:#d8d8d8"></div>
<div class="a" style="left:423.10px;top:586.10px;width:8.78px;height:8.6px;background:#d0d0d0"></div>
<div class="a" style="left:431.88px;top:586.10px;width:8.78px;height:8.6px;background:#b4b4b4"></div>
<div class="a" style="left:440.66px;top:586.10px;width:8.78px;height:8.6px;background:#a4a4a4"></div>
<div class="a" style="left:449.44px;top:586.10px;width:8.78px;height:8.6px;background:#a0a0a0"></div>
<div class="a" style="left:458.22px;top:586.10px;width:8.78px;height:8.6px;background:#ececec"></div>
<div class="a" style="left:467.00px;top:586.10px;width:8.78px;height:8.6px;background:#e4e4e4"></div>
<div class="a" style="left:475.78px;top:586.10px;width:8.78px;height:8.6px;background:#c8c8c8"></div>
<div class="a" style="left:484.56px;top:586.10px;width:8.78px;height:8.6px;background:#ececec"></div>
<div class="a" style="left:493.34px;top:586.10px;width:8.78px;height:8.6px;background:#c8c8c8"></div>
<div class="a" style="left:502.12px;top:586.10px;width:8.78px;height:8.6px;background:#a4a4a4"></div>
<div class="a" style="left:510.90px;top:586.10px;width:8.78px;height:8.6px;background:#ececec"></div>
<div class="a" style="left:519.68px;top:586.10px;width:8.78px;height:8.6px;background:#d4d4d4"></div>
<div class="a" style="left:528.46px;top:586.10px;width:8.78px;height:8.6px;background:#d0d0d0"></div>
<div class="a" style="left:537.24px;top:586.10px;width:8.78px;height:8.6px;background:#d4d4d4"></div>
<div class="a" style="left:546.02px;top:586.10px;width:8.78px;height:8.6px;background:#f4f4f4"></div>
<div class="a" style="left:579px;top:585.03px;font-size:11.9px;color:#5a5a5a;">14/11/2023 15:32</div>
<div class="a" style="left:709.3px;top:583.68px;font-size:11.6px;color:#5a5a5a;">OneDrive de Robe...</div>
<svg class="a" style="left:322.4px;top:616.3000000000001px" width="16" height="16" viewBox="0 0 16 16"><circle cx="8" cy="8" r="6.9" fill="none" stroke="#1f9b3c" stroke-width="1.1"/><path d="M4.7 8.2 L7 10.4 L11.3 6" fill="none" stroke="#1f9b3c" stroke-width="1.1"/></svg>
<svg class="a" style="left:351px;top:614.3px" width="19" height="21" viewBox="0 0 19 21"><path d="M3.5 1.2 H12.8 L17.8 6.2 V19.3 H3.5 Z" fill="#fafafa" stroke="#a8a8a8" stroke-width="0.8"/><path d="M12.8 1.2 V6.2 H17.8" fill="none" stroke="#a8a8a8" stroke-width="0.8"/><circle cx="13.5" cy="10" r="3.2" fill="#ed6c47"/><path d="M13.5 6.8 A3.2 3.2 0 0 1 16.7 10 H13.5 Z" fill="#ffb59e"/><rect x="0.9" y="5" width="9.5" height="10" rx="1" fill="#c43e1c"/><text x="5.65" y="13.4" font-family="Liberation Sans" font-weight="bold" font-size="8.5" fill="#fff" text-anchor="middle">P</text></svg>
<div class="a" style="left:379.20px;top:621.30px;width:8.78px;height:8.6px;background:#e8e8e8"></div>
<div class="a" style="left:387.98px;top:621.30px;width:8.78px;height:8.6px;background:#c4c4c4"></div>
<div class="a" style="left:396.76px;top:621.30px;width:8.78px;height:8.6px;background:#bcbcbc"></div>
<div class="a" style="left:405.54px;top:621.30px;width:8.78px;height:8.6px;background:#bcbcbc"></div>
<div class="a" style="left:414.32px;top:621.30px;width:8.78px;height:8.6px;background:#b4b4b4"></div>
<div class="a" style="left:423.10px;top:621.30px;width:8.78px;height:8.6px;background:#ececec"></div>
<div class="a" style="left:431.88px;top:621.30px;width:8.78px;height:8.6px;background:#b4b4b4"></div>
<div class="a" style="left:440.66px;top:621.30px;width:8.78px;height:8.6px;background:#c8c8c8"></div>
<div class="a" style="left:449.44px;top:621.30px;width:8.78px;height:8.6px;background:#ececec"></div>
<div class="a" style="left:458.22px;top:621.30px;width:8.78px;height:8.6px;background:#9a9a9a"></div>
<div class="a" style="left:467.00px;top:621.30px;width:8.78px;height:8.6px;background:#e4e4e4"></div>
<div class="a" style="left:475.78px;top:621.30px;width:8.78px;height:8.6px;background:#c4c4c4"></div>
<div class="a" style="left:484.56px;top:621.30px;width:8.78px;height:8.6px;background:#ececec"></div>
<div class="a" style="left:458.22px;top:629.90px;width:8.78px;height:8.6px;background:#f0f0f0"></div>
<div class="a" style="left:467.00px;top:629.90px;width:8.78px;height:8.6px;background:#f4f4f4"></div>
<div class="a" style="left:579px;top:621.03px;font-size:11.9px;color:#5a5a5a;">14/11/2023 15:31</div>
<div class="a" style="left:709.3px;top:619.68px;font-size:11.6px;color:#5a5a5a;">OneDrive de Robe...</div>
<svg class="a" style="left:322.4px;top:652.3000000000001px" width="16" height="16" viewBox="0 0 16 16"><circle cx="8" cy="8" r="6.9" fill="none" stroke="#1f9b3c" stroke-width="1.1"/><path d="M4.7 8.2 L7 10.4 L11.3 6" fill="none" stroke="#1f9b3c" stroke-width="1.1"/></svg>
<svg class="a" style="left:351px;top:650.3px" width="19" height="21" viewBox="0 0 19 21"><path d="M3.5 1.2 H12.8 L17.8 6.2 V19.3 H3.5 Z" fill="#fafafa" stroke="#a8a8a8" stroke-width="0.8"/><path d="M12.8 1.2 V6.2 H17.8" fill="none" stroke="#a8a8a8" stroke-width="0.8"/><circle cx="13.5" cy="10" r="3.2" fill="#ed6c47"/><path d="M13.5 6.8 A3.2 3.2 0 0 1 16.7 10 H13.5 Z" fill="#ffb59e"/><rect x="0.9" y="5" width="9.5" height="10" rx="1" fill="#c43e1c"/><text x="5.65" y="13.4" font-family="Liberation Sans" font-weight="bold" font-size="8.5" fill="#fff" text-anchor="middle">P</text></svg>
<div class="a" style="left:379.20px;top:656.50px;width:8.78px;height:8.6px;background:#ececec"></div>
<div class="a" style="left:387.98px;top:656.50px;width:8.78px;height:8.6px;background:#c4c4c4"></div>
<div class="a" style="left:396.76px;top:656.50px;width:8.78px;height:8.6px;background:#d8d8d8"></div>
<div class="a" style="left:405.54px;top:656.50px;width:8.78px;height:8.6px;background:#b4b4b4"></div>
<div class="a" style="left:414.32px;top:656.50px;width:8.78px;height:8.6px;background:#ececec"></div>
<div class="a" style="left:423.10px;top:656.50px;width:8.78px;height:8.6px;background:#c0c0c0"></div>
<div class="a" style="left:431.88px;top:656.50px;width:8.78px;height:8.6px;background:#b8b8b8"></div>
<div class="a" style="left:440.66px;top:656.50px;width:8.78px;height:8.6px;background:#fafafa"></div>
<div class="a" style="left:414.32px;top:665.10px;width:8.78px;height:8.6px;background:#f8f8f8"></div>
<div class="a" style="left:423.10px;top:665.10px;width:8.78px;height:8.6px;background:#f4f4f4"></div>
<div class="a" style="left:579px;top:657.03px;font-size:11.9px;color:#5a5a5a;">14/11/2023 15:31</div>
<div class="a" style="left:709.3px;top:655.68px;font-size:11.6px;color:#5a5a5a;">OneDrive de Robe...</div>
<svg class="a" style="left:322.4px;top:688.3000000000001px" width="16" height="16" viewBox="0 0 16 16"><circle cx="8" cy="8" r="6.9" fill="none" stroke="#1f9b3c" stroke-width="1.1"/><path d="M4.7 8.2 L7 10.4 L11.3 6" fill="none" stroke="#1f9b3c" stroke-width="1.1"/></svg>
<svg class="a" style="left:351px;top:686.3px" width="19" height="21" viewBox="0 0 19 21"><path d="M3.5 1.2 H12.8 L17.8 6.2 V19.3 H3.5 Z" fill="#fafafa" stroke="#a8a8a8" stroke-width="0.8"/><path d="M12.8 1.2 V6.2 H17.8" fill="none" stroke="#a8a8a8" stroke-width="0.8"/><g fill="#4a86d8"><rect x="11" y="8" width="5.6" height="1.2"/><rect x="11" y="10.3" width="5.6" height="1.2"/><rect x="11" y="12.6" width="5.6" height="1.2"/></g><rect x="0.9" y="5" width="9.5" height="10" rx="1" fill="#1a5cc8"/><text x="5.65" y="13.4" font-family="Liberation Sans" font-weight="bold" font-size="8.5" fill="#fff" text-anchor="middle">W</text></svg>
<div class="a" style="left:379.20px;top:692.00px;width:8.78px;height:8.6px;background:#fafafa"></div>
<div class="a" style="left:387.98px;top:692.00px;width:8.78px;height:8.6px;background:#a4a4a4"></div>
<div class="a" style="left:396.76px;top:692.00px;width:8.78px;height:8.6px;background:#d4d4d4"></div>
<div class="a" style="left:405.54px;top:692.00px;width:8.78px;height:8.6px;background:#b4b4b4"></div>
<div class="a" style="left:414.32px;top:692.00px;width:8.78px;height:8.6px;background:#f0f0f0"></div>
<div class="a" style="left:423.10px;top:692.00px;width:8.78px;height:8.6px;background:#9c9c9c"></div>
<div class="a" style="left:431.88px;top:692.00px;width:8.78px;height:8.6px;background:#d4d4d4"></div>
<div class="a" style="left:440.66px;top:692.00px;width:8.78px;height:8.6px;background:#c4c4c4"></div>
<div class="a" style="left:449.44px;top:692.00px;width:8.78px;height:8.6px;background:#d4d4d4"></div>
<div class="a" style="left:458.22px;top:692.00px;width:8.78px;height:8.6px;background:#a8a8a8"></div>
<div class="a" style="left:467.00px;top:692.00px;width:8.78px;height:8.6px;background:#d8d8d8"></div>
<div class="a" style="left:475.78px;top:692.00px;width:8.78px;height:8.6px;background:#ececec"></div>
<div class="a" style="left:484.56px;top:692.00px;width:8.78px;height:8.6px;background:#c4c4c4"></div>
<div class="a" style="left:493.34px;top:692.00px;width:8.78px;height:8.6px;background:#c4c4c4"></div>
<div class="a" style="left:502.12px;top:692.00px;width:8.78px;height:8.6px;background:#d4d4d4"></div>
<div class="a" style="left:510.90px;top:692.00px;width:8.78px;height:8.6px;background:#c8c8c8"></div>
<div class="a" style="left:519.68px;top:692.00px;width:8.78px;height:8.6px;background:#d4d4d4"></div>
<div class="a" style="left:379.20px;top:700.60px;width:8.78px;height:8.6px;background:#fcfcfc"></div>
<div class="a" style="left:387.98px;top:700.60px;width:8.78px;height:8.6px;background:#f0f0f0"></div>
<div class="a" style="left:396.76px;top:700.60px;width:8.78px;height:8.6px;background:#e8e8e8"></div>
<div class="a" style="left:405.54px;top:700.60px;width:8.78px;height:8.6px;background:#f8f8f8"></div>
<div class="a" style="left:414.32px;top:700.60px;width:8.78px;height:8.6px;background:#fcfcfc"></div>
<div class="a" style="left:423.10px;top:700.60px;width:8.78px;height:8.6px;background:#ececec"></div>
<div class="a" style="left:431.88px;top:700.60px;width:8.78px;height:8.6px;background:#ececec"></div>
<div class="a" style="left:440.66px;top:700.60px;width:8.78px;height:8.6px;background:#f4f4f4"></div>
<div class="a" style="left:449.44px;top:700.60px;width:8.78px;height:8.6px;background:#ececec"></div>
<div class="a" style="left:458.22px;top:700.60px;width:8.78px;height:8.6px;background:#ececec"></div>
<div class="a" style="left:467.00px;top:700.60px;width:8.78px;height:8.6px;background:#f0f0f0"></div>
<div class="a" style="left:484.56px;top:700.60px;width:8.78px;height:8.6px;background:#e8e8e8"></div>
<div class="a" style="left:493.34px;top:700.60px;width:8.78px;height:8.6px;background:#e8e8e8"></div>
<div class="a" style="left:502.12px;top:700.60px;width:8.78px;height:8.6px;background:#e8e8e8"></div>
<div class="a" style="left:510.90px;top:700.60px;width:8.78px;height:8.6px;background:#e8e8e8"></div>
<div class="a" style="left:519.68px;top:700.60px;width:8.78px;height:8.6px;background:#e8e8e8"></div>
<div class="a" style="left:579px;top:693.03px;font-size:11.9px;color:#5a5a5a;">14/11/2023 15:31</div>
<div class="a" style="left:709.3px;top:691.68px;font-size:11.6px;color:#5a5a5a;">OneDrive de Robe...</div>
<svg class="a" style="left:322.4px;top:724.3000000000001px" width="16" height="16" viewBox="0 0 16 16"><circle cx="8" cy="8" r="6.9" fill="none" stroke="#1f9b3c" stroke-width="1.1"/><path d="M4.7 8.2 L7 10.4 L11.3 6" fill="none" stroke="#1f9b3c" stroke-width="1.1"/></svg>
<svg class="a" style="left:351px;top:724.8000000000001px" width="20" height="15" viewBox="0 0 20 15"><rect x="0.8" y="0.8" width="18.2" height="13.4" fill="#f2ede4" stroke="#5a4636" stroke-width="1"/><path d="M9.9 1 V14" stroke="#8a7a6a" stroke-width="0.8"/><path d="M1.3 13.2 H18.5" stroke="#3a2a20" stroke-width="1.2"/><path d="M3 4 H8 M3 6 H8 M3 8 H8 M11.8 4 H16.8 M11.8 6 H16.8 M11.8 8 H16.8" stroke="#d8d0c4" stroke-width="0.6"/></svg>
<div class="a" style="left:379.20px;top:727.20px;width:8.78px;height:8.6px;background:#ececec"></div>
<div class="a" style="left:387.98px;top:727.20px;width:8.78px;height:8.6px;background:#d4d4d4"></div>
<div class="a" style="left:396.76px;top:727.20px;width:8.78px;height:8.6px;background:#dcdcdc"></div>
<div class="a" style="left:405.54px;top:727.20px;width:8.78px;height:8.6px;background:#f0f0f0"></div>
<div class="a" style="left:414.32px;top:727.20px;width:8.78px;height:8.6px;background:#a8a8a8"></div>
<div class="a" style="left:423.10px;top:727.20px;width:8.78px;height:8.6px;background:#d8d8d8"></div>
<div class="a" style="left:431.88px;top:727.20px;width:8.78px;height:8.6px;background:#d4d4d4"></div>
<div class="a" style="left:440.66px;top:727.20px;width:8.78px;height:8.6px;background:#ececec"></div>
<div class="a" style="left:449.44px;top:727.20px;width:8.78px;height:8.6px;background:#d8d8d8"></div>
<div class="a" style="left:458.22px;top:727.20px;width:8.78px;height:8.6px;background:#d4d4d4"></div>
<div class="a" style="left:467.00px;top:727.20px;width:8.78px;height:8.6px;background:#d4d4d4"></div>
<div class="a" style="left:475.78px;top:727.20px;width:8.78px;height:8.6px;background:#f0f0f0"></div>
<div class="a" style="left:484.56px;top:727.20px;width:8.78px;height:8.6px;background:#e0e0e0"></div>
<div class="a" style="left:493.34px;top:727.20px;width:8.78px;height:8.6px;background:#d8d8d8"></div>
<div class="a" style="left:502.12px;top:727.20px;width:8.78px;height:8.6px;background:#ececec"></div>
<div class="a" style="left:510.90px;top:727.20px;width:8.78px;height:8.6px;background:#e0e0e0"></div>
<div class="a" style="left:519.68px;top:727.20px;width:8.78px;height:8.6px;background:#f0f0f0"></div>
<div class="a" style="left:528.46px;top:727.20px;width:8.78px;height:8.6px;background:#c4c4c4"></div>
<div class="a" style="left:537.24px;top:727.20px;width:8.78px;height:8.6px;background:#f4f4f4"></div>
<div class="a" style="left:379.20px;top:735.80px;width:8.78px;height:8.6px;background:#f8f8f8"></div>
<div class="a" style="left:387.98px;top:735.80px;width:8.78px;height:8.6px;background:#dcdcdc"></div>
<div class="a" style="left:396.76px;top:735.80px;width:8.78px;height:8.6px;background:#dcdcdc"></div>
<div class="a" style="left:405.54px;top:735.80px;width:8.78px;height:8.6px;background:#e0e0e0"></div>
<div class="a" style="left:414.32px;top:735.80px;width:8.78px;height:8.6px;background:#c0c0c0"></div>
<div class="a" style="left:423.10px;top:735.80px;width:8.78px;height:8.6px;background:#d0d0d0"></div>
<div class="a" style="left:431.88px;top:735.80px;width:8.78px;height:8.6px;background:#dcdcdc"></div>
<div class="a" style="left:440.66px;top:735.80px;width:8.78px;height:8.6px;background:#dcdcdc"></div>
<div class="a" style="left:449.44px;top:735.80px;width:8.78px;height:8.6px;background:#d4d4d4"></div>
<div class="a" style="left:458.22px;top:735.80px;width:8.78px;height:8.6px;background:#e0e0e0"></div>
<div class="a" style="left:467.00px;top:735.80px;width:8.78px;height:8.6px;background:#c0c0c0"></div>
<div class="a" style="left:475.78px;top:735.80px;width:8.78px;height:8.6px;background:#f4f4f4"></div>
<div class="a" style="left:484.56px;top:735.80px;width:8.78px;height:8.6px;background:#d8d8d8"></div>
<div class="a" style="left:493.34px;top:735.80px;width:8.78px;height:8.6px;background:#d8d8d8"></div>
<div class="a" style="left:502.12px;top:735.80px;width:8.78px;height:8.6px;background:#e4e4e4"></div>
<div class="a" style="left:510.90px;top:735.80px;width:8.78px;height:8.6px;background:#d4d4d4"></div>
<div class="a" style="left:519.68px;top:735.80px;width:8.78px;height:8.6px;background:#f0f0f0"></div>
<div class="a" style="left:528.46px;top:735.80px;width:8.78px;height:8.6px;background:#ececec"></div>
<div class="a" style="left:537.24px;top:735.80px;width:8.78px;height:8.6px;background:#dcdcdc"></div>
<div class="a" style="left:546.02px;top:735.80px;width:8.78px;height:8.6px;background:#dcdcdc"></div>
<div class="a" style="left:579px;top:729.03px;font-size:11.9px;color:#5a5a5a;">14/11/2023 15:31</div>
<div class="a" style="left:709.3px;top:727.68px;font-size:11.6px;color:#5a5a5a;">OneDrive de Robe...</div>
<svg class="a" style="left:322.4px;top:760.3000000000001px" width="16" height="16" viewBox="0 0 16 16"><circle cx="8" cy="8" r="6.9" fill="none" stroke="#1f9b3c" stroke-width="1.1"/><path d="M4.7 8.2 L7 10.4 L11.3 6" fill="none" stroke="#1f9b3c" stroke-width="1.1"/></svg>
<svg class="a" style="left:351px;top:758.3px" width="19" height="21" viewBox="0 0 19 21"><path d="M3.5 1.2 H12.8 L17.8 6.2 V19.3 H3.5 Z" fill="#fafafa" stroke="#a8a8a8" stroke-width="0.8"/><path d="M12.8 1.2 V6.2 H17.8" fill="none" stroke="#a8a8a8" stroke-width="0.8"/><g fill="#4a86d8"><rect x="11" y="8" width="5.6" height="1.2"/><rect x="11" y="10.3" width="5.6" height="1.2"/><rect x="11" y="12.6" width="5.6" height="1.2"/></g><rect x="0.9" y="5" width="9.5" height="10" rx="1" fill="#1a5cc8"/><text x="5.65" y="13.4" font-family="Liberation Sans" font-weight="bold" font-size="8.5" fill="#fff" text-anchor="middle">W</text></svg>
<div class="a" style="left:379.20px;top:762.00px;width:8.78px;height:8.6px;background:#f0f0f0"></div>
<div class="a" style="left:387.98px;top:762.00px;width:8.78px;height:8.6px;background:#d0d0d0"></div>
<div class="a" style="left:396.76px;top:762.00px;width:8.78px;height:8.6px;background:#f0f0f0"></div>
<div class="a" style="left:405.54px;top:762.00px;width:8.78px;height:8.6px;background:#d4d4d4"></div>
<div class="a" style="left:414.32px;top:762.00px;width:8.78px;height:8.6px;background:#e0e0e0"></div>
<div class="a" style="left:423.10px;top:762.00px;width:8.78px;height:8.6px;background:#e0e0e0"></div>
<div class="a" style="left:431.88px;top:762.00px;width:8.78px;height:8.6px;background:#d0d0d0"></div>
<div class="a" style="left:440.66px;top:762.00px;width:8.78px;height:8.6px;background:#d4d4d4"></div>
<div class="a" style="left:449.44px;top:762.00px;width:8.78px;height:8.6px;background:#ececec"></div>
<div class="a" style="left:458.22px;top:762.00px;width:8.78px;height:8.6px;background:#e0e0e0"></div>
<div class="a" style="left:467.00px;top:762.00px;width:8.78px;height:8.6px;background:#ececec"></div>
<div class="a" style="left:475.78px;top:762.00px;width:8.78px;height:8.6px;background:#d4d4d4"></div>
<div class="a" style="left:484.56px;top:762.00px;width:8.78px;height:8.6px;background:#e8e8e8"></div>
<div class="a" style="left:493.34px;top:762.00px;width:8.78px;height:8.6px;background:#ececec"></div>
<div class="a" style="left:502.12px;top:762.00px;width:8.78px;height:8.6px;background:#dcdcdc"></div>
<div class="a" style="left:379.20px;top:770.60px;width:8.78px;height:8.6px;background:#f4f4f4"></div>
<div class="a" style="left:387.98px;top:770.60px;width:8.78px;height:8.6px;background:#e4e4e4"></div>
<div class="a" style="left:396.76px;top:770.60px;width:8.78px;height:8.6px;background:#c8c8c8"></div>
<div class="a" style="left:405.54px;top:770.60px;width:8.78px;height:8.6px;background:#f8f8f8"></div>
<div class="a" style="left:414.32px;top:770.60px;width:8.78px;height:8.6px;background:#f8f8f8"></div>
<div class="a" style="left:423.10px;top:770.60px;width:8.78px;height:8.6px;background:#b8b8b8"></div>
<div class="a" style="left:431.88px;top:770.60px;width:8.78px;height:8.6px;background:#e8e8e8"></div>
<div class="a" style="left:440.66px;top:770.60px;width:8.78px;height:8.6px;background:#e4e4e4"></div>
<div class="a" style="left:449.44px;top:770.60px;width:8.78px;height:8.6px;background:#f0f0f0"></div>
<div class="a" style="left:458.22px;top:770.60px;width:8.78px;height:8.6px;background:#dcdcdc"></div>
<div class="a" style="left:467.00px;top:770.60px;width:8.78px;height:8.6px;background:#e4e4e4"></div>
<div class="a" style="left:475.78px;top:770.60px;width:8.78px;height:8.6px;background:#ececec"></div>
<div class="a" style="left:484.56px;top:770.60px;width:8.78px;height:8.6px;background:#d0d0d0"></div>
<div class="a" style="left:493.34px;top:770.60px;width:8.78px;height:8.6px;background:#ececec"></div>
<div class="a" style="left:502.12px;top:770.60px;width:8.78px;height:8.6px;background:#dcdcdc"></div>
<div class="a" style="left:510.90px;top:770.60px;width:8.78px;height:8.6px;background:#fbfbfb"></div>
<div class="a" style="left:579px;top:765.03px;font-size:11.9px;color:#5a5a5a;">14/11/2023 15:31</div>
<div class="a" style="left:709.3px;top:763.68px;font-size:11.6px;color:#5a5a5a;">OneDrive de Robe...</div><div class="a" style="left:854px;top:140px;width:300px;height:643px;background:#fff;border-left:1px solid #ededed"></div>
<div class="a" style="left:855px;top:140px;width:299px;height:220px;background:#f9f9f9"></div>
<svg class="a" style="left:962px;top:207px" width="76" height="86" viewBox="0 0 76 86"><path d="M12.5 1.2 H56.5 L74.8 19.5 V84.3 H12.5 Z" fill="#fff" stroke="#8c8c8c" stroke-width="1.3"/><path d="M56.5 1.2 V19.5 H74.8" fill="none" stroke="#8c8c8c" stroke-width="1.3"/>
<path d="M57.5 42 H46.3 A11.2 11.2 0 0 0 68.7 42 Z" fill="#ed6c47"/><path d="M57.5 42 H46.3 A11.2 11.2 0 0 1 57.5 30.8 Z" fill="#ff8f6b"/><path d="M59 40.6 V28.1 A12.5 12.5 0 0 1 71.5 40.6 Z" fill="#ffc7b5"/><path d="M57.5 29 V43 M45 42 H70" stroke="#fff" stroke-width="1"/>
<rect x="1.5" y="21.5" width="42.5" height="42.5" rx="3" fill="#c43e1c"/><text x="23.4" y="54.4" font-family="Liberation Sans" font-weight="bold" font-size="30" fill="#fff" text-anchor="middle">P</text></svg>
<svg class="a" style="left:877px;top:384px" width="25" height="28" viewBox="0 0 25 28"><path d="M4.5 0.6 H18 L23.8 6.4 V26.6 H4.5 Z" fill="#fff" stroke="#a0a0a0" stroke-width="0.8"/><path d="M18 0.6 V6.4 H23.8" fill="none" stroke="#a0a0a0" stroke-width="0.8"/><circle cx="18" cy="13.5" r="4" fill="#ed6c47"/><path d="M18 9.5 A4 4 0 0 1 22 13.5 H18 Z" fill="#ffb59e"/><rect x="0.8" y="7" width="13.6" height="13.6" rx="1.2" fill="#c43e1c"/><text x="7.6" y="18" font-family="Liberation Sans" font-weight="bold" font-size="11" fill="#fff" text-anchor="middle">P</text></svg>
<div class="a" style="left:917px;top:390.49px;font-size:16.2px;color:#111;-webkit-text-stroke:0.45px #111">RaDians-Video.pptx</div>
<div class="a" style="left:877.5px;top:431.73px;font-size:11.9px;color:#5f5f5f;">Este elemento no está compartido</div>
<div class="a" style="left:877px;top:457px;width:102px;height:29px;border:1px solid #e3e3e3;border-bottom-color:#d0d0d0;border-radius:4px;background:#fff"></div>
<svg class="a" style="left:889px;top:463px" width="17" height="16" viewBox="0 0 17 16"><path d="M5 2.6 H3.3 Q1.5 2.6 1.5 4.4 V12.4 Q1.5 14.4 3.5 14.4 H11 Q13 14.4 13 12.4 V11" fill="none" stroke="#3a3a3a" stroke-width="1.1"/><path d="M4.4 10.2 Q5.6 6 10.6 6 V8.4 L15 4.5 L10.6 0.8 V3.2 Q5.8 3.4 4.4 10.2 Z" fill="none" stroke="#1878d0" stroke-width="1.1" stroke-linejoin="round"/></svg>
<div class="a" style="left:913.4px;top:465.64px;font-size:12px;color:#1a1a1a;">Compartir</div>
<div class="a" style="left:877.2px;top:521.36px;font-size:12.1px;color:#111;-webkit-text-stroke:0.35px #111">Actividad reciente</div>
<svg class="a" style="left:890px;top:551px" width="14" height="14" viewBox="0 0 14 14"><path d="M9.6 1.4 Q10.6 0.5 11.7 1.4 L12.4 2.1 Q13.3 3.2 12.4 4.2 L4.2 12.4 L1.2 13 L1.7 10 Z M8.6 2.4 L11.4 5.2" fill="none" stroke="#2a86e0" stroke-width="1.1" stroke-linejoin="round"/></svg>
<div class="a" style="left:925.3px;top:554.31px;font-size:11.45px;color:#666;">Tú se editó varias veces · Ayer</div>
<div class="a" style="left:877.2px;top:601.04px;font-size:12px;color:#111;-webkit-text-stroke:0.35px #111">Archivos relacionados</div>
<svg class="a" style="left:886px;top:636px" width="24" height="22" viewBox="0 0 24 22"><path d="M6 0.5 H17 L22.5 6 V20.8 H6 Z" fill="#fff" stroke="#c0c0c0" stroke-width="0.8"/><path d="M17 0.5 V6 H22.5" fill="none" stroke="#c0c0c0" stroke-width="0.8"/><circle cx="17" cy="11" r="3.6" fill="#ed6c47"/><path d="M17 7.4 A3.6 3.6 0 0 1 20.6 11 H17 Z" fill="#ffb59e"/><rect x="0.6" y="5.2" width="12.2" height="12.2" rx="1" fill="#c43e1c"/><text x="6.7" y="15" font-family="Liberation Sans" font-weight="bold" font-size="10" fill="#fff" text-anchor="middle">P</text></svg>
<div class="a" style="left:926.3px;top:643.48px;font-size:11.25px;color:#1a1a1a;">RaDians PPT.pptx</div>
<div class="a" style="left:877.2px;top:703.81px;font-size:11.8px;color:#111;-webkit-text-stroke:0.35px #111">Conversaciones relacionadas</div>
<div class="a" style="left:877.2px;top:731.12px;font-size:11.67px;color:#6a6a6a;">No hay conversaciones relacionadas para este</div>
<div class="a" style="left:877.2px;top:746.62px;font-size:11.67px;color:#6a6a6a;">elemento.</div>
<div class="a" style="left:1149px;top:156px;width:2px;height:342px;background:#8a8a8a;border-radius:1px"></div>
<svg class="a" style="left:1008px;top:597px" width="14" height="20" viewBox="0 0 14 20"><path d="M0.7 0.7 V15.5 L4.2 12.3 L6.8 18.2 L9 17.2 L6.5 11.5 H11.2 Z" fill="#fff" stroke="#1a1a2a" stroke-width="1" stroke-linejoin="round"/></svg><div id="status"></div>
<div class="a" style="left:11.7px;top:787.98px;font-size:11.6px;color:#1a1a1a;">83 elementos</div>
<div class="a" style="left:92px;top:789px;width:1px;height:9px;background:#e0e0e0"></div>
<div class="a" style="left:103.5px;top:787.98px;font-size:11.6px;color:#1a1a1a;">1 elemento seleccionado&nbsp; 988 KB</div>
<div class="a" style="left:285px;top:789px;width:1px;height:9px;background:#e0e0e0"></div></div>
</body></html>
